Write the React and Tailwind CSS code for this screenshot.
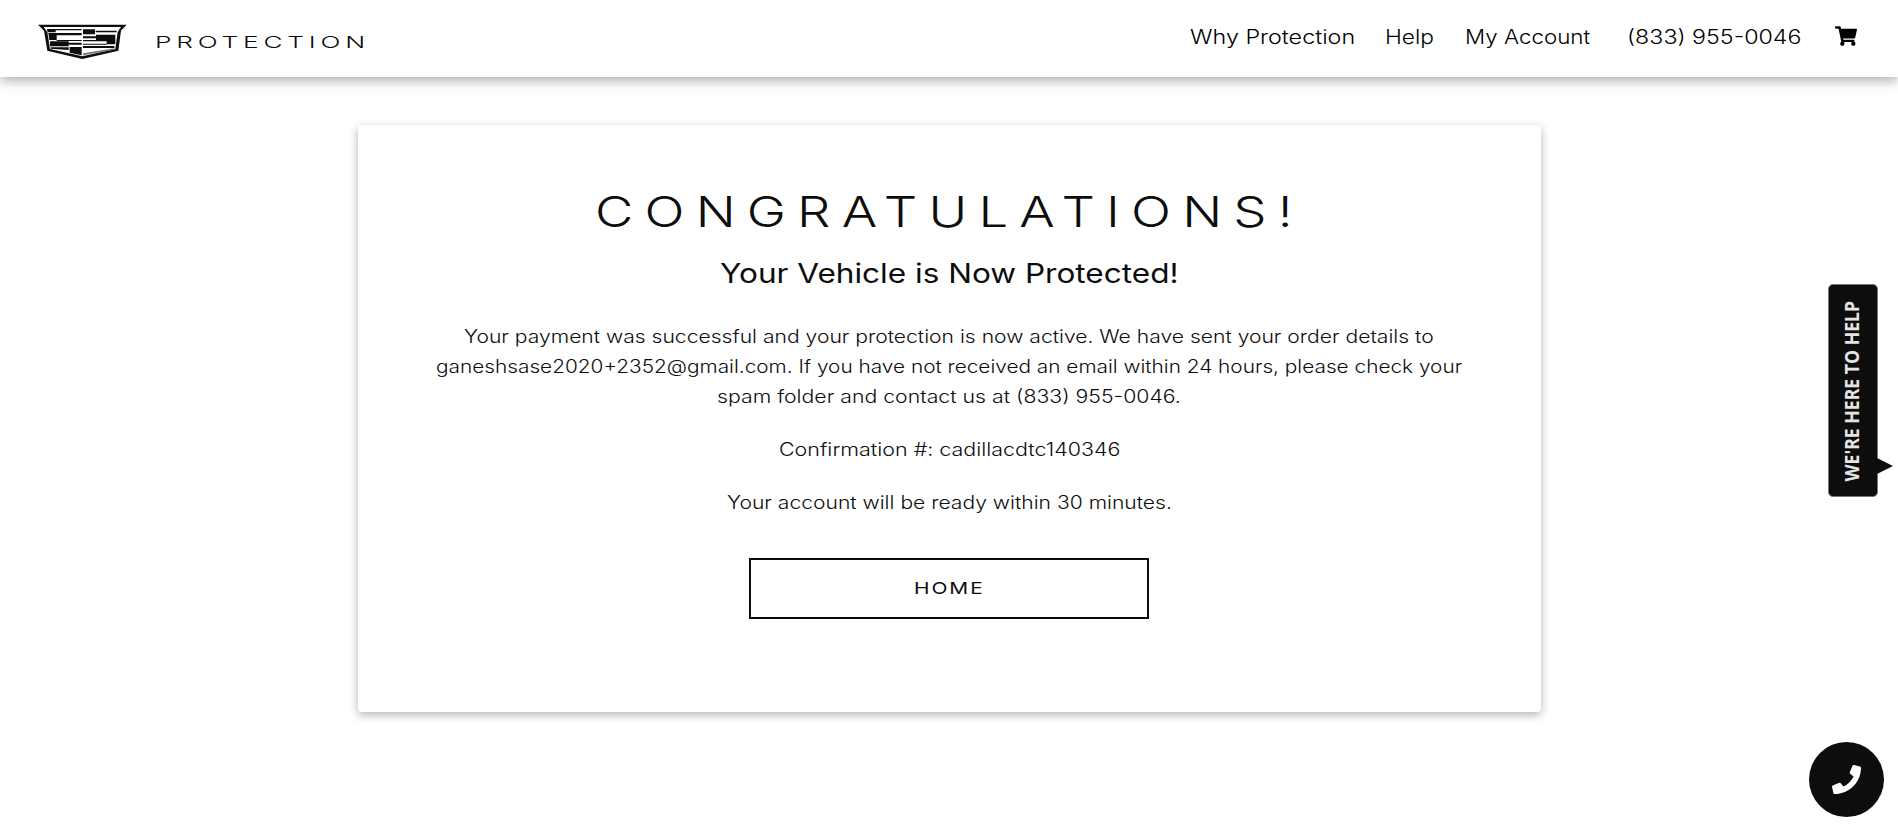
import { useLayoutEffect, useRef, useState } from "react";
import { FaPhone, FaShoppingCart } from "react-icons/fa";

// Extended-width lettering: the text is stretched to fill the width of its box.
function WideText({ className, children }) {
  const box = useRef(null);
  const text = useRef(null);
  const [scale, setScale] = useState(1);
  useLayoutEffect(() => {
    setScale(box.current.offsetWidth / text.current.offsetWidth);
  }, []);
  return (
    <span ref={box} className={`block text-left whitespace-nowrap ${className}`}>
      <span ref={text} className="inline-block origin-left" style={{ transform: `scaleX(${scale})` }}>
        {children}
      </span>
    </span>
  );
}

function Crest() {
  return (
    <svg viewBox="114 72 267 108" className="h-9 w-[89px]" fill="#0d0d0d" aria-hidden="true">
      <path d="M114 74H380L363 92L355 152L247 177L142 152L132 92Z" />
      <path fill="#fff" d="M131 81H363L353 96L346 147L247 169L150 147L142 96Z" />
      <path d="M141 87H245V91H167V97H143ZM145 99H245V106H170V120H148ZM170 120H245V123H170ZM150 124H206V128H245V134H206V139H150ZM152 142H206V150L152 146ZM209 141H245V166L209 158Z" />
      <path d="M249 88H285V103H249ZM287 92H350V97H287ZM288 104H346V120H288ZM249 109H288V115H249ZM249 120H346V133H320V124H249ZM249 131H320V134H249ZM249 138H343V144H249Z" />
      <path d="M249 160L343 145V149L249 166Z" fill="#777" />
    </svg>
  );
}

export default function App() {
  return (
    <div className="relative h-[836px] overflow-hidden bg-white font-['Inter','Liberation_Sans',sans-serif] text-[#0d0d0d]">
      <header className="flex h-[77px] justify-between pl-[38px] pr-[41px] shadow-[0_3px_12px_rgba(0,0,0,0.35)]">
        <div className="flex pt-6">
          <Crest />
          <WideText className="ml-7 mt-[6px] w-[215px] text-[16.5px] leading-6 font-light tracking-[3px]">PROTECTION</WideText>
        </div>
        <nav className="flex pt-[22px] text-[19.5px] leading-[30px] font-light text-black">
          <WideText className="w-[165px]">Why Protection</WideText>
          <WideText className="ml-[30px] w-[49px]">Help</WideText>
          <WideText className="ml-[31px] w-[125px]">My Account</WideText>
          <WideText className="ml-[37px] w-[174px]">(833) 955-0046</WideText>
          <FaShoppingCart className="ml-[34px] mt-1 h-5 w-[22px]" />
        </nav>
      </header>

      <main className="mx-auto mt-12 flex h-[587px] w-[1183px] flex-col items-center rounded bg-white pt-[61px] shadow-[0_3px_10px_rgba(0,0,0,0.3)]">
        <h1>
          <WideText className="w-[709px] text-[42.5px] leading-[52px] font-light tracking-[9px]">CONGRATULATIONS!</WideText>
        </h1>
        <h2 className="mt-[16px]">
          <WideText className="w-[459px] text-[27px] leading-[40px] font-normal">Your Vehicle is Now Protected!</WideText>
        </h2>
        <p className="mt-[28px] flex flex-col items-center text-[18px] leading-[30px] font-light">
          <WideText className="w-[970px]">Your payment was successful and your protection is now active. We have sent your order details to</WideText>
          <WideText className="w-[1026px]">ganeshsase2020+2352@gmail.com. If you have not received an email within 24 hours, please check your</WideText>
          <WideText className="w-[464px]">spam folder and contact us at (833) 955-0046.</WideText>
        </p>
        <p className="mt-[23px] text-[18px] leading-[30px] font-light">
          <WideText className="w-[341px]">Confirmation #: cadillacdtc140346</WideText>
        </p>
        <p className="mt-[23px] text-[18px] leading-[30px] font-light">
          <WideText className="w-[445px]">Your account will be ready within 30 minutes.</WideText>
        </p>
        <button className="mt-[40px] flex h-[61px] w-[400px] items-center justify-center border-2 border-[#0d0d0d]">
          <WideText className="-mt-0.5 w-[71px] text-[16.5px] leading-6 font-normal tracking-[1.5px]">HOME</WideText>
        </button>
      </main>

      <div className="absolute left-[1828px] top-[284px] flex h-[213px] w-[50px] items-center justify-center rounded-[5px] border border-[#777] bg-[#0d0d0d]">
        <span className="mr-[3px] -rotate-90">
          <WideText className="w-[181px] font-['Open_Sans',sans-serif] text-[20px] leading-6 font-bold text-[#e4e4e4]">WE'RE HERE TO HELP</WideText>
        </span>
        <svg viewBox="0 0 16 16" className="absolute left-[48px] top-[173px] size-4" fill="#0d0d0d" aria-hidden="true">
          <path d="M0 0L16 8L0 16Z" />
        </svg>
      </div>

      <button className="absolute left-[1809px] top-[742px] flex size-[75px] items-center justify-center rounded-full bg-[#0d0d0d] text-white">
        <FaPhone className="size-[29px]" />
      </button>
    </div>
  );
}
